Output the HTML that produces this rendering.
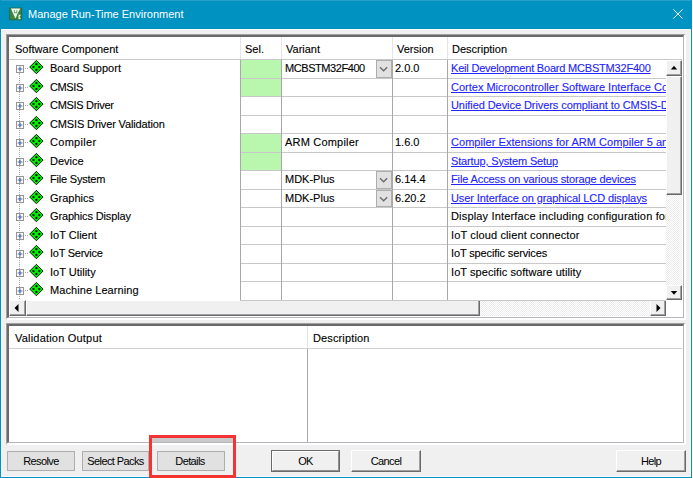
<!DOCTYPE html><html><head><meta charset="utf-8"><style>
*{margin:0;padding:0;box-sizing:border-box}
html,body{width:693px;height:478px;overflow:hidden;background:#f0f0f0}
body{position:relative;font-family:"Liberation Sans",sans-serif;font-size:11px;color:#000}
.a{position:absolute}
.t{position:absolute;white-space:nowrap;line-height:12px;font-size:11px;-webkit-text-stroke:0.12px currentColor}
.lk{color:#2424ff;text-decoration:underline}
.btnf{position:absolute;background:#e1e1e1;border:1px solid #adadad}
.b3{position:absolute;background:#f0f0f0;border-top:1px solid #fff;border-left:1px solid #fff;border-right:1px solid #696969;border-bottom:1px solid #696969;box-shadow:inset -1px -1px 0 #a0a0a0}

</style></head><body>
<div class="a" style="left:0;top:0;width:692px;height:29px;background:#0092c1"></div>
<div class="a" style="left:0;top:0;width:692px;height:1px;background:#2a9fc9"></div>
<div class="a" style="left:0;top:0;width:1px;height:478px;background:#0092c1"></div>
<div class="a" style="left:691px;top:0;width:1px;height:478px;background:#0092c1"></div>
<div class="a" style="left:0;top:477px;width:692px;height:1px;background:#0092c1"></div>
<div class="a" style="left:692px;top:0;width:1px;height:478px;background:#fff"></div>
<div class="a" style="left:1px;top:29px;width:690px;height:448px;border:1px solid #fbf8f6"></div>
<svg class="a" style="left:9px;top:7px" width="14" height="14" viewBox="9 7 14 14"><rect x="9.7" y="8" width="12" height="11.8" fill="#3d873d" stroke="#2a6230" stroke-width="0.7"/><path d="M10.9 8.6 L20.3 8.6 L17.6 13.6 L16.2 17 L15.4 18.6 Z" fill="#f4fff4"/><path d="M14.3 10 V13.2 M16.8 10 V13.2 M14.3 12.6 H16.8" stroke="#5a9a5a" stroke-width="0.9"/><path d="M18.6 15 L20 15.4 L18.8 16.8 L20 18.6 L18.4 18.8" fill="none" stroke="#e8f8e8" stroke-width="1.1"/></svg>
<div class="t" style="left:28px;top:8.0px;color:#fff;font-size:11px;-webkit-text-stroke:0">Manage Run-Time Environment</div>
<svg class="a" style="left:672px;top:8px" width="12" height="12" viewBox="0 0 12 12"><path d="M1.3 1.3 L10.6 10.6 M10.6 1.3 L1.3 10.6" stroke="#eef8fc" stroke-width="1"/></svg>
<div class="a" style="left:6px;top:34px;width:680px;height:286px;background:#fff;border-top:1px solid #a0a0a0;border-left:1px solid #a0a0a0;border-right:2px solid #fff;border-bottom:2px solid #fff"></div>
<div class="a" style="left:7px;top:35px;width:677px;height:283px;border-top:2px solid #696969;border-left:2px solid #696969;border-right:1px solid #b4b8bc;border-bottom:1px solid #b4b8bc"></div>
<div class="a" style="left:9px;top:59px;width:673px;height:1px;background:#c8c8c8"></div>
<div class="a" style="left:240px;top:37px;width:1px;height:22px;background:#e5e5e5"></div>
<div class="a" style="left:281px;top:37px;width:1px;height:22px;background:#e5e5e5"></div>
<div class="a" style="left:392px;top:37px;width:1px;height:22px;background:#e5e5e5"></div>
<div class="a" style="left:447px;top:37px;width:1px;height:22px;background:#e5e5e5"></div>
<div class="t" style="left:15px;top:42.5px">Software Component</div>
<div class="t" style="left:245px;top:42.5px">Sel.</div>
<div class="t" style="left:286px;top:42.5px">Variant</div>
<div class="t" style="left:397px;top:42.5px">Version</div>
<div class="t" style="left:452px;top:42.5px">Description</div>
<div class="a" style="left:9px;top:60px;width:657px;height:240px;overflow:hidden">
<div class="a" style="left:10px;top:13px;width:1px;height:240px;border-left:1px dotted #a8a8a8"></div>
<div class="a" style="left:232px;top:0.29999999999999716px;width:40px;height:17.5px;background:#b9f6ae"></div>
<div class="a" style="left:231px;top:17.799999999999997px;width:426px;height:1px;background:#c8c8c8"></div>
<svg class="a" style="left:6px;top:-1.0px" width="30" height="16" viewBox="0 0 30 16"><defs><linearGradient id="bg{k}" x1="0" y1="0" x2="1" y2="1"><stop offset="0" stop-color="#fff"/><stop offset="1" stop-color="#d8d8d8"/></linearGradient></defs><rect x="1.5" y="6.5" width="7" height="7" fill="url(#bg0)" stroke="#959595" stroke-width="1"/><path d="M2.6 10 H7.4 M5 7.6 V12.4" stroke="#4a64b0" stroke-width="1.2"/><path d="M10 9.5 H14" stroke="#a8a8a8" stroke-width="1" stroke-dasharray="1 1"/><path d="M21.4 1.35 L28.1 8.05 L21.4 14.75 L14.7 8.05 Z" fill="#00f000" stroke="#000" stroke-width="0.9"/><circle cx="21.4" cy="5.15" r="1.15"/><circle cx="21.4" cy="10.95" r="1.15"/><circle cx="18.5" cy="8.05" r="1.15"/><circle cx="24.3" cy="8.05" r="1.15"/></svg>
<div class="t" style="left:41px;top:2.200000000000003px">Board Support</div>
<div class="t" style="left:276px;top:2.200000000000003px;letter-spacing:-0.43px">MCBSTM32F400</div>
<div class="a" style="left:367px;top:0.29999999999999716px;width:16px;height:17.5px;background:#e1e1e1;border:1px solid #adadad"></div>
<svg class="a" style="left:370px;top:6.299999999999997px" width="10" height="6" viewBox="0 0 10 6"><path d="M1 1.2 L4.6 4.8 L8.2 1.2" fill="none" stroke="#6a6a6a" stroke-width="1.3"/></svg>
<div class="t" style="left:386px;top:2.200000000000003px">2.0.0</div>
<div class="t lk" style="left:442px;top:2.200000000000003px;letter-spacing:-0.2px">Keil Development Board MCBSTM32F400</div>
<div class="a" style="left:232px;top:18.799999999999997px;width:40px;height:17.5px;background:#b9f6ae"></div>
<div class="a" style="left:231px;top:36.3px;width:426px;height:1px;background:#c8c8c8"></div>
<svg class="a" style="left:6px;top:17.5px" width="30" height="16" viewBox="0 0 30 16"><defs><linearGradient id="bg{k}" x1="0" y1="0" x2="1" y2="1"><stop offset="0" stop-color="#fff"/><stop offset="1" stop-color="#d8d8d8"/></linearGradient></defs><rect x="1.5" y="6.5" width="7" height="7" fill="url(#bg1)" stroke="#959595" stroke-width="1"/><path d="M2.6 10 H7.4 M5 7.6 V12.4" stroke="#4a64b0" stroke-width="1.2"/><path d="M10 9.5 H14" stroke="#a8a8a8" stroke-width="1" stroke-dasharray="1 1"/><path d="M21.4 1.35 L28.1 8.05 L21.4 14.75 L14.7 8.05 Z" fill="#00f000" stroke="#000" stroke-width="0.9"/><circle cx="21.4" cy="5.15" r="1.15"/><circle cx="21.4" cy="10.95" r="1.15"/><circle cx="18.5" cy="8.05" r="1.15"/><circle cx="24.3" cy="8.05" r="1.15"/></svg>
<div class="t" style="left:41px;top:20.700000000000003px;letter-spacing:-0.4px">CMSIS</div>
<div class="t lk" style="left:442px;top:20.700000000000003px">Cortex Microcontroller Software Interface Components</div>
<div class="a" style="left:231px;top:54.8px;width:426px;height:1px;background:#c8c8c8"></div>
<svg class="a" style="left:6px;top:36.0px" width="30" height="16" viewBox="0 0 30 16"><defs><linearGradient id="bg{k}" x1="0" y1="0" x2="1" y2="1"><stop offset="0" stop-color="#fff"/><stop offset="1" stop-color="#d8d8d8"/></linearGradient></defs><rect x="1.5" y="6.5" width="7" height="7" fill="url(#bg2)" stroke="#959595" stroke-width="1"/><path d="M2.6 10 H7.4 M5 7.6 V12.4" stroke="#4a64b0" stroke-width="1.2"/><path d="M10 9.5 H14" stroke="#a8a8a8" stroke-width="1" stroke-dasharray="1 1"/><path d="M21.4 1.35 L28.1 8.05 L21.4 14.75 L14.7 8.05 Z" fill="#00f000" stroke="#000" stroke-width="0.9"/><circle cx="21.4" cy="5.15" r="1.15"/><circle cx="21.4" cy="10.95" r="1.15"/><circle cx="18.5" cy="8.05" r="1.15"/><circle cx="24.3" cy="8.05" r="1.15"/></svg>
<div class="t" style="left:41px;top:39.2px;letter-spacing:-0.3px">CMSIS Driver</div>
<div class="t lk" style="left:442px;top:39.2px;letter-spacing:-0.07px">Unified Device Drivers compliant to CMSIS-Driver Specifications</div>
<div class="a" style="left:231px;top:73.30000000000001px;width:426px;height:1px;background:#c8c8c8"></div>
<svg class="a" style="left:6px;top:54.5px" width="30" height="16" viewBox="0 0 30 16"><defs><linearGradient id="bg{k}" x1="0" y1="0" x2="1" y2="1"><stop offset="0" stop-color="#fff"/><stop offset="1" stop-color="#d8d8d8"/></linearGradient></defs><rect x="1.5" y="6.5" width="7" height="7" fill="url(#bg3)" stroke="#959595" stroke-width="1"/><path d="M2.6 10 H7.4 M5 7.6 V12.4" stroke="#4a64b0" stroke-width="1.2"/><path d="M10 9.5 H14" stroke="#a8a8a8" stroke-width="1" stroke-dasharray="1 1"/><path d="M21.4 1.35 L28.1 8.05 L21.4 14.75 L14.7 8.05 Z" fill="#00f000" stroke="#000" stroke-width="0.9"/><circle cx="21.4" cy="5.15" r="1.15"/><circle cx="21.4" cy="10.95" r="1.15"/><circle cx="18.5" cy="8.05" r="1.15"/><circle cx="24.3" cy="8.05" r="1.15"/></svg>
<div class="t" style="left:41px;top:57.7px;letter-spacing:-0.13px">CMSIS Driver Validation</div>
<div class="a" style="left:232px;top:74.30000000000001px;width:40px;height:17.5px;background:#b9f6ae"></div>
<div class="a" style="left:231px;top:91.80000000000001px;width:426px;height:1px;background:#c8c8c8"></div>
<svg class="a" style="left:6px;top:73.0px" width="30" height="16" viewBox="0 0 30 16"><defs><linearGradient id="bg{k}" x1="0" y1="0" x2="1" y2="1"><stop offset="0" stop-color="#fff"/><stop offset="1" stop-color="#d8d8d8"/></linearGradient></defs><rect x="1.5" y="6.5" width="7" height="7" fill="url(#bg4)" stroke="#959595" stroke-width="1"/><path d="M2.6 10 H7.4 M5 7.6 V12.4" stroke="#4a64b0" stroke-width="1.2"/><path d="M10 9.5 H14" stroke="#a8a8a8" stroke-width="1" stroke-dasharray="1 1"/><path d="M21.4 1.35 L28.1 8.05 L21.4 14.75 L14.7 8.05 Z" fill="#00f000" stroke="#000" stroke-width="0.9"/><circle cx="21.4" cy="5.15" r="1.15"/><circle cx="21.4" cy="10.95" r="1.15"/><circle cx="18.5" cy="8.05" r="1.15"/><circle cx="24.3" cy="8.05" r="1.15"/></svg>
<div class="t" style="left:41px;top:76.19999999999999px;letter-spacing:0.3px">Compiler</div>
<div class="t" style="left:276px;top:76.19999999999999px;letter-spacing:0.2px">ARM Compiler</div>
<div class="t" style="left:386px;top:76.19999999999999px">1.6.0</div>
<div class="t lk" style="left:442px;top:76.19999999999999px;letter-spacing:0.05px">Compiler Extensions for ARM Compiler 5 and ARM Compiler 6</div>
<div class="a" style="left:232px;top:92.80000000000001px;width:40px;height:17.5px;background:#b9f6ae"></div>
<div class="a" style="left:231px;top:110.30000000000001px;width:426px;height:1px;background:#c8c8c8"></div>
<svg class="a" style="left:6px;top:91.5px" width="30" height="16" viewBox="0 0 30 16"><defs><linearGradient id="bg{k}" x1="0" y1="0" x2="1" y2="1"><stop offset="0" stop-color="#fff"/><stop offset="1" stop-color="#d8d8d8"/></linearGradient></defs><rect x="1.5" y="6.5" width="7" height="7" fill="url(#bg5)" stroke="#959595" stroke-width="1"/><path d="M2.6 10 H7.4 M5 7.6 V12.4" stroke="#4a64b0" stroke-width="1.2"/><path d="M10 9.5 H14" stroke="#a8a8a8" stroke-width="1" stroke-dasharray="1 1"/><path d="M21.4 1.35 L28.1 8.05 L21.4 14.75 L14.7 8.05 Z" fill="#00f000" stroke="#000" stroke-width="0.9"/><circle cx="21.4" cy="5.15" r="1.15"/><circle cx="21.4" cy="10.95" r="1.15"/><circle cx="18.5" cy="8.05" r="1.15"/><circle cx="24.3" cy="8.05" r="1.15"/></svg>
<div class="t" style="left:41px;top:94.69999999999999px">Device</div>
<div class="t lk" style="left:442px;top:94.69999999999999px;letter-spacing:-0.15px">Startup, System Setup</div>
<div class="a" style="left:231px;top:128.8px;width:426px;height:1px;background:#c8c8c8"></div>
<svg class="a" style="left:6px;top:110.0px" width="30" height="16" viewBox="0 0 30 16"><defs><linearGradient id="bg{k}" x1="0" y1="0" x2="1" y2="1"><stop offset="0" stop-color="#fff"/><stop offset="1" stop-color="#d8d8d8"/></linearGradient></defs><rect x="1.5" y="6.5" width="7" height="7" fill="url(#bg6)" stroke="#959595" stroke-width="1"/><path d="M2.6 10 H7.4 M5 7.6 V12.4" stroke="#4a64b0" stroke-width="1.2"/><path d="M10 9.5 H14" stroke="#a8a8a8" stroke-width="1" stroke-dasharray="1 1"/><path d="M21.4 1.35 L28.1 8.05 L21.4 14.75 L14.7 8.05 Z" fill="#00f000" stroke="#000" stroke-width="0.9"/><circle cx="21.4" cy="5.15" r="1.15"/><circle cx="21.4" cy="10.95" r="1.15"/><circle cx="18.5" cy="8.05" r="1.15"/><circle cx="24.3" cy="8.05" r="1.15"/></svg>
<div class="t" style="left:41px;top:113.19999999999999px;letter-spacing:-0.2px">File System</div>
<div class="t" style="left:276px;top:113.19999999999999px">MDK-Plus</div>
<div class="a" style="left:367px;top:111.30000000000001px;width:16px;height:17.5px;background:#e1e1e1;border:1px solid #adadad"></div>
<svg class="a" style="left:370px;top:117.30000000000001px" width="10" height="6" viewBox="0 0 10 6"><path d="M1 1.2 L4.6 4.8 L8.2 1.2" fill="none" stroke="#6a6a6a" stroke-width="1.3"/></svg>
<div class="t" style="left:386px;top:113.19999999999999px">6.14.4</div>
<div class="t lk" style="left:442px;top:113.19999999999999px;letter-spacing:-0.12px">File Access on various storage devices</div>
<div class="a" style="left:231px;top:147.3px;width:426px;height:1px;background:#c8c8c8"></div>
<svg class="a" style="left:6px;top:128.5px" width="30" height="16" viewBox="0 0 30 16"><defs><linearGradient id="bg{k}" x1="0" y1="0" x2="1" y2="1"><stop offset="0" stop-color="#fff"/><stop offset="1" stop-color="#d8d8d8"/></linearGradient></defs><rect x="1.5" y="6.5" width="7" height="7" fill="url(#bg7)" stroke="#959595" stroke-width="1"/><path d="M2.6 10 H7.4 M5 7.6 V12.4" stroke="#4a64b0" stroke-width="1.2"/><path d="M10 9.5 H14" stroke="#a8a8a8" stroke-width="1" stroke-dasharray="1 1"/><path d="M21.4 1.35 L28.1 8.05 L21.4 14.75 L14.7 8.05 Z" fill="#00f000" stroke="#000" stroke-width="0.9"/><circle cx="21.4" cy="5.15" r="1.15"/><circle cx="21.4" cy="10.95" r="1.15"/><circle cx="18.5" cy="8.05" r="1.15"/><circle cx="24.3" cy="8.05" r="1.15"/></svg>
<div class="t" style="left:41px;top:131.7px">Graphics</div>
<div class="t" style="left:276px;top:131.7px">MDK-Plus</div>
<div class="a" style="left:367px;top:129.8px;width:16px;height:17.5px;background:#e1e1e1;border:1px solid #adadad"></div>
<svg class="a" style="left:370px;top:135.8px" width="10" height="6" viewBox="0 0 10 6"><path d="M1 1.2 L4.6 4.8 L8.2 1.2" fill="none" stroke="#6a6a6a" stroke-width="1.3"/></svg>
<div class="t" style="left:386px;top:131.7px">6.20.2</div>
<div class="t lk" style="left:442px;top:131.7px;letter-spacing:-0.1px">User Interface on graphical LCD displays</div>
<div class="a" style="left:231px;top:165.8px;width:426px;height:1px;background:#c8c8c8"></div>
<svg class="a" style="left:6px;top:147.0px" width="30" height="16" viewBox="0 0 30 16"><defs><linearGradient id="bg{k}" x1="0" y1="0" x2="1" y2="1"><stop offset="0" stop-color="#fff"/><stop offset="1" stop-color="#d8d8d8"/></linearGradient></defs><rect x="1.5" y="6.5" width="7" height="7" fill="url(#bg8)" stroke="#959595" stroke-width="1"/><path d="M2.6 10 H7.4 M5 7.6 V12.4" stroke="#4a64b0" stroke-width="1.2"/><path d="M10 9.5 H14" stroke="#a8a8a8" stroke-width="1" stroke-dasharray="1 1"/><path d="M21.4 1.35 L28.1 8.05 L21.4 14.75 L14.7 8.05 Z" fill="#00f000" stroke="#000" stroke-width="0.9"/><circle cx="21.4" cy="5.15" r="1.15"/><circle cx="21.4" cy="10.95" r="1.15"/><circle cx="18.5" cy="8.05" r="1.15"/><circle cx="24.3" cy="8.05" r="1.15"/></svg>
<div class="t" style="left:41px;top:150.2px;letter-spacing:-0.15px">Graphics Display</div>
<div class="t" style="left:442px;top:150.2px;letter-spacing:0.17px">Display Interface including configuration for emWin</div>
<div class="a" style="left:231px;top:184.3px;width:426px;height:1px;background:#c8c8c8"></div>
<svg class="a" style="left:6px;top:165.5px" width="30" height="16" viewBox="0 0 30 16"><defs><linearGradient id="bg{k}" x1="0" y1="0" x2="1" y2="1"><stop offset="0" stop-color="#fff"/><stop offset="1" stop-color="#d8d8d8"/></linearGradient></defs><rect x="1.5" y="6.5" width="7" height="7" fill="url(#bg9)" stroke="#959595" stroke-width="1"/><path d="M2.6 10 H7.4 M5 7.6 V12.4" stroke="#4a64b0" stroke-width="1.2"/><path d="M10 9.5 H14" stroke="#a8a8a8" stroke-width="1" stroke-dasharray="1 1"/><path d="M21.4 1.35 L28.1 8.05 L21.4 14.75 L14.7 8.05 Z" fill="#00f000" stroke="#000" stroke-width="0.9"/><circle cx="21.4" cy="5.15" r="1.15"/><circle cx="21.4" cy="10.95" r="1.15"/><circle cx="18.5" cy="8.05" r="1.15"/><circle cx="24.3" cy="8.05" r="1.15"/></svg>
<div class="t" style="left:41px;top:168.7px">IoT Client</div>
<div class="t" style="left:442px;top:168.7px;letter-spacing:0.13px">IoT cloud client connector</div>
<div class="a" style="left:231px;top:202.8px;width:426px;height:1px;background:#c8c8c8"></div>
<svg class="a" style="left:6px;top:184.0px" width="30" height="16" viewBox="0 0 30 16"><defs><linearGradient id="bg{k}" x1="0" y1="0" x2="1" y2="1"><stop offset="0" stop-color="#fff"/><stop offset="1" stop-color="#d8d8d8"/></linearGradient></defs><rect x="1.5" y="6.5" width="7" height="7" fill="url(#bg10)" stroke="#959595" stroke-width="1"/><path d="M2.6 10 H7.4 M5 7.6 V12.4" stroke="#4a64b0" stroke-width="1.2"/><path d="M10 9.5 H14" stroke="#a8a8a8" stroke-width="1" stroke-dasharray="1 1"/><path d="M21.4 1.35 L28.1 8.05 L21.4 14.75 L14.7 8.05 Z" fill="#00f000" stroke="#000" stroke-width="0.9"/><circle cx="21.4" cy="5.15" r="1.15"/><circle cx="21.4" cy="10.95" r="1.15"/><circle cx="18.5" cy="8.05" r="1.15"/><circle cx="24.3" cy="8.05" r="1.15"/></svg>
<div class="t" style="left:41px;top:187.2px;letter-spacing:-0.25px">IoT Service</div>
<div class="t" style="left:442px;top:187.2px;letter-spacing:-0.13px">IoT specific services</div>
<div class="a" style="left:231px;top:221.3px;width:426px;height:1px;background:#c8c8c8"></div>
<svg class="a" style="left:6px;top:202.5px" width="30" height="16" viewBox="0 0 30 16"><defs><linearGradient id="bg{k}" x1="0" y1="0" x2="1" y2="1"><stop offset="0" stop-color="#fff"/><stop offset="1" stop-color="#d8d8d8"/></linearGradient></defs><rect x="1.5" y="6.5" width="7" height="7" fill="url(#bg11)" stroke="#959595" stroke-width="1"/><path d="M2.6 10 H7.4 M5 7.6 V12.4" stroke="#4a64b0" stroke-width="1.2"/><path d="M10 9.5 H14" stroke="#a8a8a8" stroke-width="1" stroke-dasharray="1 1"/><path d="M21.4 1.35 L28.1 8.05 L21.4 14.75 L14.7 8.05 Z" fill="#00f000" stroke="#000" stroke-width="0.9"/><circle cx="21.4" cy="5.15" r="1.15"/><circle cx="21.4" cy="10.95" r="1.15"/><circle cx="18.5" cy="8.05" r="1.15"/><circle cx="24.3" cy="8.05" r="1.15"/></svg>
<div class="t" style="left:41px;top:205.7px">IoT Utility</div>
<div class="t" style="left:442px;top:205.7px;letter-spacing:0.07px">IoT specific software utility</div>
<div class="a" style="left:231px;top:239.8px;width:426px;height:1px;background:#c8c8c8"></div>
<svg class="a" style="left:6px;top:221.0px" width="30" height="16" viewBox="0 0 30 16"><defs><linearGradient id="bg{k}" x1="0" y1="0" x2="1" y2="1"><stop offset="0" stop-color="#fff"/><stop offset="1" stop-color="#d8d8d8"/></linearGradient></defs><rect x="1.5" y="6.5" width="7" height="7" fill="url(#bg12)" stroke="#959595" stroke-width="1"/><path d="M2.6 10 H7.4 M5 7.6 V12.4" stroke="#4a64b0" stroke-width="1.2"/><path d="M10 9.5 H14" stroke="#a8a8a8" stroke-width="1" stroke-dasharray="1 1"/><path d="M21.4 1.35 L28.1 8.05 L21.4 14.75 L14.7 8.05 Z" fill="#00f000" stroke="#000" stroke-width="0.9"/><circle cx="21.4" cy="5.15" r="1.15"/><circle cx="21.4" cy="10.95" r="1.15"/><circle cx="18.5" cy="8.05" r="1.15"/><circle cx="24.3" cy="8.05" r="1.15"/></svg>
<div class="t" style="left:41px;top:224.2px;letter-spacing:0.07px">Machine Learning</div>
<div class="a" style="left:231px;top:0;width:1px;height:240px;background:#a8a8a8"></div>
<div class="a" style="left:272px;top:0;width:1px;height:240px;background:#a8a8a8"></div>
<div class="a" style="left:383px;top:0;width:1px;height:240px;background:#a8a8a8"></div>
<div class="a" style="left:438px;top:0;width:1px;height:240px;background:#a8a8a8"></div>
</div>
<div class="a" style="left:666px;top:60px;width:16px;height:240px;background:repeating-conic-gradient(#ffffff 0 25%, #ebebeb 0 50%) 0 0/2px 2px"></div>
<div class="b3" style="left:666px;top:60px;width:16px;height:16px"></div>
<svg class="a" style="left:670px;top:65px" width="8" height="5"><path d="M0.8 4.5 L4 0.8 L7.2 4.5 Z" fill="#000"/></svg>
<div class="b3" style="left:666px;top:76px;width:16px;height:119px"></div>
<div class="b3" style="left:666px;top:285px;width:16px;height:15px"></div>
<svg class="a" style="left:670px;top:290px" width="8" height="6"><path d="M0.8 1 L7.2 1 L4 4.7 Z" fill="#000"/></svg>
<div class="a" style="left:9px;top:300px;width:657px;height:16px;background:repeating-conic-gradient(#ffffff 0 25%, #ebebeb 0 50%) 0 0/2px 2px"></div>
<div class="b3" style="left:9px;top:300px;width:17px;height:16px"></div>
<svg class="a" style="left:14px;top:304px" width="5" height="8"><path d="M4.5 0 L0.5 4 L4.5 8 Z" fill="#000"/></svg>
<div class="b3" style="left:26px;top:300px;width:454px;height:16px"></div>
<div class="b3" style="left:650px;top:300px;width:16px;height:16px"></div>
<svg class="a" style="left:656px;top:304px" width="5" height="8"><path d="M0.5 0 L4.5 4 L0.5 8 Z" fill="#000"/></svg>
<div class="a" style="left:666px;top:300px;width:16px;height:16px;background:#fff"></div>
<div class="a" style="left:240px;top:300px;width:426px;height:1px;background:#c8c8c8"></div>
<div class="a" style="left:6px;top:323px;width:680px;height:122px;background:#fff;border-top:1px solid #a0a0a0;border-left:1px solid #a0a0a0;border-right:2px solid #fff;border-bottom:2px solid #fff"></div>
<div class="a" style="left:7px;top:324px;width:677px;height:119px;border-top:2px solid #696969;border-left:2px solid #696969;border-right:1px solid #b4b8bc;border-bottom:1px solid #b4b8bc"></div>
<div class="a" style="left:9px;top:348px;width:673px;height:1px;background:#d0d0d0"></div>
<div class="a" style="left:307px;top:326px;width:1px;height:22px;background:#e5e5e5"></div>
<div class="a" style="left:307px;top:349px;width:1px;height:93px;background:#a8a8a8"></div>
<div class="t" style="left:15px;top:331.5px;letter-spacing:0.2px">Validation Output</div>
<div class="t" style="left:313px;top:331.5px;letter-spacing:0.13px">Description</div>
<div class="btnf" style="left:7px;top:451px;width:68px;height:20px"></div>
<div class="t" style="left:7px;top:455px;width:68px;text-align:center;letter-spacing:-0.6px;-webkit-text-stroke:0">Resolve</div>
<div class="btnf" style="left:82px;top:451px;width:67px;height:20px"></div>
<div class="t" style="left:82px;top:455px;width:67px;text-align:center;letter-spacing:-0.6px;-webkit-text-stroke:0">Select Packs</div>
<div class="btnf" style="left:157px;top:451px;width:68px;height:20px"></div>
<div class="t" style="left:156px;top:455px;width:68px;text-align:center;letter-spacing:-0.6px;-webkit-text-stroke:0">Details</div>
<div class="b3" style="left:271px;top:450px;width:69px;height:22px"></div>
<div class="a" style="left:271px;top:450px;width:69px;height:22px;border:1px solid #6a6a6a"></div>
<div class="a" style="left:272px;top:451px;width:67px;height:20px;border-top:1px solid #fff;border-left:1px solid #fff;border-right:1px solid #909090;border-bottom:1px solid #909090"></div>
<div class="t" style="left:271px;top:455px;width:69px;text-align:center;letter-spacing:-0.6px;-webkit-text-stroke:0">OK</div>
<div class="b3" style="left:351px;top:450px;width:70px;height:22px"></div>
<div class="t" style="left:351px;top:455px;width:70px;text-align:center;letter-spacing:-0.6px;-webkit-text-stroke:0">Cancel</div>
<div class="b3" style="left:616px;top:450px;width:70px;height:22px"></div>
<div class="t" style="left:616px;top:455px;width:70px;text-align:center;letter-spacing:-0.6px;-webkit-text-stroke:0">Help</div>
<div class="a" style="left:152px;top:438px;width:81px;height:4px;background:#c9c9c9"></div>
<div class="a" style="left:149px;top:435px;width:87px;height:43px;border:3px solid #f43434"></div>
</body></html>
